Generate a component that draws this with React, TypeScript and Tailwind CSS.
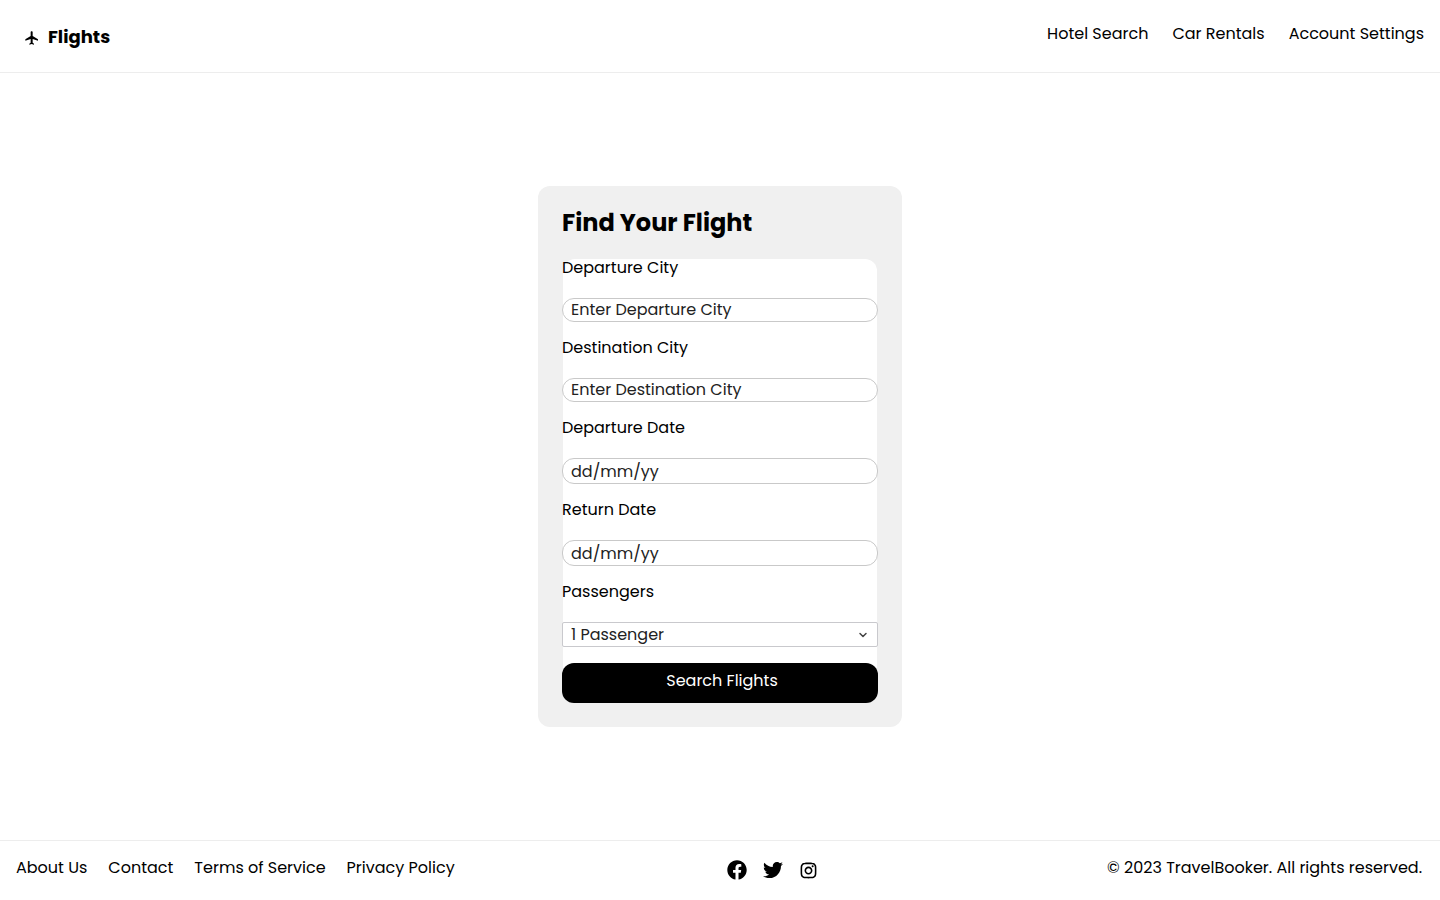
import type { ReactNode } from "react";
import { MdFlight } from "react-icons/md";
import { RiInstagramLine } from "react-icons/ri";
import { FaFacebook, FaTwitter } from "react-icons/fa";
import { ChevronDown } from "lucide-react";

const inputClass =
  "w-full rounded-xl border border-[#c9c9c9] bg-white px-2 text-[#222222] placeholder:text-[#222222] placeholder:opacity-100";

function Field({ id, label, children }: { id: string; label: string; children: ReactNode }) {
  return (
    <div className="flex flex-col gap-[21px]">
      <label htmlFor={id} className="leading-[18px]">
        {label}
      </label>
      {children}
    </div>
  );
}

export default function App() {
  return (
    <div className="flex min-h-screen flex-col bg-white font-[Poppins,'Open_Sans',sans-serif] text-base text-black">
      <header className="flex h-[73px] items-center justify-between border-b border-[#ededed] pr-4 pl-6">
        <a href="#" className="flex items-center gap-2 pt-0.5">
          <MdFlight className="mt-0.5 size-4" />
          <h1 className="text-lg leading-7 font-bold">Flights</h1>
        </a>
        <nav className="flex gap-6 pb-1">
          <a href="#hotels">Hotel Search</a>
          <a href="#cars">Car Rentals</a>
          <a href="#account">Account Settings</a>
        </nav>
      </header>

      <main className="flex grow items-center justify-center">
        <section className="w-[364px] rounded-xl bg-[#f0f0f0] p-6">
          <h2 className="pb-[23px] text-2xl leading-[26px] font-bold">Find Your Flight</h2>
          <form className="mx-px rounded-xl bg-white">
            <div className="-mx-px flex flex-col gap-[17px]">
              <Field id="from" label="Departure City">
                <input id="from" type="text" placeholder="Enter Departure City" className={`h-6 ${inputClass}`} />
              </Field>
              <Field id="to" label="Destination City">
                <input id="to" type="text" placeholder="Enter Destination City" className={`h-6 ${inputClass}`} />
              </Field>
              <Field id="depart" label="Departure Date">
                <input id="depart" type="text" placeholder="dd/mm/yy" className={`h-[26px] ${inputClass}`} />
              </Field>
              <Field id="return" label="Return Date">
                <input id="return" type="text" placeholder="dd/mm/yy" className={`h-[26px] ${inputClass}`} />
              </Field>
              <Field id="passengers" label="Passengers">
                <div className="relative">
                  <select
                    id="passengers"
                    className="block h-[25px] w-full appearance-none rounded-xs border border-[#c9c9cd] bg-white px-2 leading-[23px] text-[#222222]"
                  >
                    <option>1 Passenger</option>
                    <option>2 Passengers</option>
                    <option>3 Passengers</option>
                    <option>4 Passengers</option>
                  </select>
                  <ChevronDown
                    strokeWidth={3}
                    className="pointer-events-none absolute top-[7px] right-[9px] size-3 text-[#444444]"
                  />
                </div>
              </Field>
            </div>
            <div className="-mx-px pt-4">
              <button type="button" className="block h-10 w-full rounded-xl bg-black pb-1 pl-1 text-white">
                Search Flights
              </button>
            </div>
          </form>
        </section>
      </main>

      <footer className="flex h-[60px] items-start justify-between border-t border-[#ededed] pt-[15px] pr-[18px] pl-4">
        <nav className="flex gap-[21px]">
          <a href="#about">About Us</a>
          <a href="#contact">Contact</a>
          <a href="#terms">Terms of Service</a>
          <a href="#privacy">Privacy Policy</a>
        </nav>
        <div className="flex h-7 items-center gap-4 pr-4">
          <a href="#facebook" aria-label="Facebook"><FaFacebook className="size-5" /></a>
          <a href="#twitter" aria-label="Twitter"><FaTwitter className="size-5" /></a>
          <a href="#instagram" aria-label="Instagram"><RiInstagramLine className="size-[19px]" /></a>
        </div>
        <p>© 2023 TravelBooker. All rights reserved.</p>
      </footer>
    </div>
  );
}
